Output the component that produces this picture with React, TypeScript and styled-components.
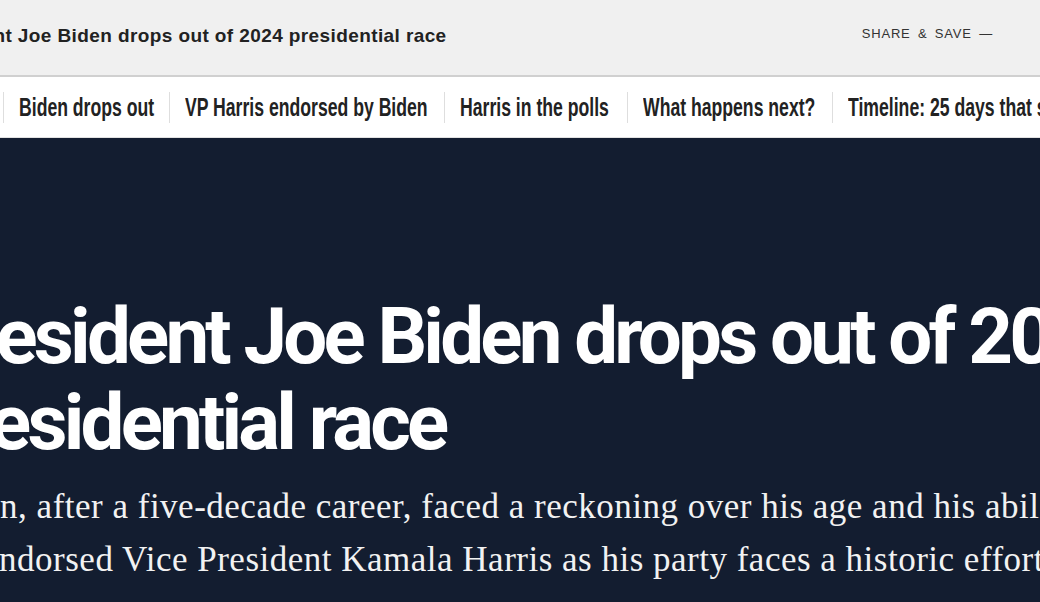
import * as React from 'react';
import styled, { createGlobalStyle } from 'styled-components';

const GlobalStyle = createGlobalStyle`
    html, body {
        margin: 0;
        padding: 0;
        background: #131d30;
    }
    body {
        font-family: 'Liberation Sans', Arial, sans-serif;
        overflow: hidden;
    }
`;

const Page = styled.div`
    width: 1040px;
    height: 602px;
    overflow: hidden;
    display: flex;
    flex-direction: column;
`;

const TopBar = styled.header`
    height: 77px;
    flex-shrink: 0;
    background: #f0f0f0;
    border-bottom: 2px solid #d0d0d0;
    display: flex;
    align-items: center;
    justify-content: space-between;
    padding-right: 47px;
    box-sizing: border-box;
`;

const BarTitle = styled.div`
    margin: -3px 0 0 -78px;
    font-size: 19px;
    letter-spacing: 0.4px;
    font-weight: 700;
    color: #222;
    white-space: nowrap;
`;

const ShareButton = styled.button`
    border: 0;
    background: none;
    padding: 0;
    font-family: 'Liberation Sans', Arial, sans-serif;
    font-size: 13px;
    letter-spacing: 0.8px;
    word-spacing: 3px;
    color: #333;
    text-transform: uppercase;
    white-space: nowrap;
    margin-top: -8px;
`;

const Nav = styled.nav`
    height: 61px;
    flex-shrink: 0;
    background: #fff;
    border-bottom: 1px solid #e2e2e2;
    display: flex;
    align-items: center;
    padding-left: 3px;
    box-sizing: border-box;
    white-space: nowrap;
`;

const NavItem = styled.a<{ $width: number }>`
    flex-shrink: 0;
    display: flex;
    align-items: center;
    width: ${p => p.$width}px;
    height: 31px;
    padding: 0 14px 0 15px;
    border-left: 1px solid #dedede;
    color: #222;
    text-decoration: none;
`;

// condensed headline face is not installed, so the bold sans is narrowed
const NavLabel = styled.span`
    display: inline-block;
    font-family: 'Liberation Sans', Arial, sans-serif;
    font-size: 25px;
    font-weight: 700;
    transform: scaleX(0.705);
    transform-origin: left center;
`;

const Hero = styled.section`
    flex: 1;
    background: #131d30;
    color: #fff;
    padding-top: 156px;
`;

const Headline = styled.h1`
    margin: 0 0 0 -75px;
    font-family: Roboto, 'Liberation Sans', sans-serif;
    font-size: 78px;
    line-height: 86px;
    font-weight: 700;
    letter-spacing: -3.8px;
    white-space: nowrap;
`;

const Dek = styled.p`
    margin: 14px 0 0 -68px;
    font-family: 'Liberation Serif', 'Times New Roman', serif;
    font-size: 35px;
    line-height: 53px;
    letter-spacing: 0.5px;
    color: #f2f2f2;
    white-space: nowrap;
`;

const navLinks = [
    { label: 'Biden drops out', width: 136 },
    { label: 'VP Harris endorsed by Biden', width: 245 },
    { label: 'Harris in the polls', width: 153 },
    { label: 'What happens next?', width: 175 },
    { label: 'Timeline: 25 days that shook the race', width: 340 },
];

export default function App() {
    return (
        <Page>
            <GlobalStyle />
            <TopBar>
                <BarTitle>President Joe Biden drops out of 2024 presidential race</BarTitle>
                <ShareButton>Share &amp; Save —</ShareButton>
            </TopBar>
            <Nav>
                {navLinks.map(link => (
                    <NavItem key={link.label} href="#" $width={link.width}>
                        <NavLabel>{link.label}</NavLabel>
                    </NavItem>
                ))}
            </Nav>
            <Hero>
                <Headline>
                    President Joe Biden drops out of 2024
                    <br />
                    presidential race
                </Headline>
                <Dek>
                    Biden, after a five-decade career, faced a reckoning over his age and his ability to defeat Donald Trump.
                    <br />
                    He endorsed Vice President Kamala Harris as his party faces a historic effort to replace him.
                </Dek>
            </Hero>
        </Page>
    );
}
